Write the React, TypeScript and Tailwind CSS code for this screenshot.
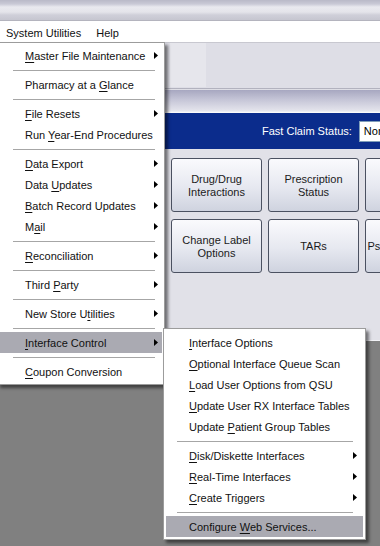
import type { ReactNode } from "react";

// ── Types ──────────────────────────────────────────────────────

type Entry =
  | { kind: "item"; label: string; u: number; arrow?: boolean; active?: boolean }
  | { kind: "sep" };

// ── Data ───────────────────────────────────────────────────────

const MAIN_MENU: Entry[] = [
  { kind: "item", label: "Master File Maintenance", u: 0, arrow: true },
  { kind: "sep" },
  { kind: "item", label: "Pharmacy at a Glance", u: 14 },
  { kind: "sep" },
  { kind: "item", label: "File Resets", u: 0, arrow: true },
  { kind: "item", label: "Run Year-End Procedures", u: 4 },
  { kind: "sep" },
  { kind: "item", label: "Data Export", u: 0, arrow: true },
  { kind: "item", label: "Data Updates", u: 5, arrow: true },
  { kind: "item", label: "Batch Record Updates", u: 0, arrow: true },
  { kind: "item", label: "Mail", u: 1, arrow: true },
  { kind: "sep" },
  { kind: "item", label: "Reconciliation", u: 0, arrow: true },
  { kind: "sep" },
  { kind: "item", label: "Third Party", u: 6, arrow: true },
  { kind: "sep" },
  { kind: "item", label: "New Store Utilities", u: 11, arrow: true },
  { kind: "sep" },
  { kind: "item", label: "Interface Control", u: 0, arrow: true, active: true },
  { kind: "sep" },
  { kind: "item", label: "Coupon Conversion", u: 0 },
];

const SUB_MENU: Entry[] = [
  { kind: "item", label: "Interface Options", u: 0 },
  { kind: "item", label: "Optional Interface Queue Scan", u: 0 },
  { kind: "item", label: "Load User Options from QSU", u: 0 },
  { kind: "item", label: "Update User RX Interface Tables", u: 0 },
  { kind: "item", label: "Update Patient Group Tables", u: 7 },
  { kind: "sep" },
  { kind: "item", label: "Disk/Diskette Interfaces", u: 0, arrow: true },
  { kind: "item", label: "Real-Time Interfaces", u: 0, arrow: true },
  { kind: "item", label: "Create Triggers", u: 0, arrow: true },
  { kind: "sep" },
  { kind: "item", label: "Configure Web Services...", u: 10, active: true },
];

// third column sits mostly past the right edge of the window
const BUTTONS: string[][] = [
  ["Drug/Drug", "Interactions"],
  ["Prescription", "Status"],
  [],
  ["Change Label", "Options"],
  ["TARs"],
  ["Pseudoephedrine"],
];

// ── Component ──────────────────────────────────────────────────

export default function App() {
  return (
    <div className="relative h-[546px] w-[380px] overflow-hidden bg-[#808080] font-['Liberation_Sans',Arial,sans-serif] text-[11px] text-[#111]">
      {/* Title bar strip */}
      <div className="h-[21px] border-b border-[#b4b4be] bg-[linear-gradient(#b9b9c8_0px,#c9c9d6_4px,#e9e9ef_7px,#e4e4ea_12px,#cfcfd9_15px,#c6c6d0_20px)]" />

      {/* Menu bar */}
      <div className="flex h-[21px] items-center bg-white pt-[3px]">
        <span className="pl-[6px]">System Utilities</span>
        <span className="pl-[15px]">Help</span>
      </div>

      {/* Toolbar area */}
      <div className="h-[46px] border-t border-[#c8c8d0] bg-[#dedee6]" />
      <div className="h-[2px] bg-[linear-gradient(#9c9cab,#f4f4f8)]" />

      {/* Silver strip */}
      <div className="h-[23px] bg-[linear-gradient(#a7a7c0,#c4c4d6_40%,#e4e4ec_90%,#ffffff)]" />

      {/* Blue status bar */}
      <div className="flex h-[36px] items-center whitespace-nowrap bg-[#0b2c8c] pl-[262px]">
        <span className="text-white">Fast Claim Status:</span>
        <div className="ml-[7px] flex h-[21px] w-[80px] shrink-0 items-center border border-[#7f9db9] bg-white pl-[4px] text-black">
          Normal
        </div>
      </div>

      {/* Button panel */}
      <div className="h-[192px] border-b border-[#f2f2f6] bg-[#e1e1e8] pl-[171px] pt-[9px]">
        <div className="grid w-[300px] grid-cols-[91px_91px_91px] gap-x-[6px] gap-y-[7px]">
          {BUTTONS.map((lines, i) => (
            <div
              key={i}
              className="flex h-[54px] flex-col items-center justify-center whitespace-nowrap rounded-[3px] border border-[#4b5161] bg-[linear-gradient(#fafafd,#e6e8f0_55%,#cfd3df)] pt-[1px] text-center leading-[13px] text-[#1b1b1b]"
            >
              {lines.map((l) => (
                <span key={l}>{l}</span>
              ))}
            </div>
          ))}
        </div>
      </div>

      {/* Faded icon in toolbar */}
      <div className="absolute left-[170px] top-[43px] h-[44px] w-[36px] bg-[#e6e6ec]" />

      {/* System Utilities drop-down */}
      <Menu
        entries={MAIN_MENU}
        className="left-[-3px] top-[42px] w-[168px]"
        textPad="pl-[25px]"
        arrowPad="pr-[4px]"
        sepClass="ml-[13px] mr-[7px]"
      />

      {/* Interface Control sub-menu */}
      <Menu
        entries={SUB_MENU}
        className="left-[163px] top-[328px] w-[203px] pt-[3px]"
        textPad="pl-[23px]"
        arrowPad="pr-[6px]"
        sepClass="ml-[11px] mr-[10px]"
      />
    </div>
  );
}

// ── Sub-components ─────────────────────────────────────────────

function Menu({
  entries,
  className,
  textPad,
  arrowPad,
  sepClass,
}: {
  entries: Entry[];
  className: string;
  textPad: string;
  arrowPad: string;
  sepClass: string;
}) {
  return (
    <div
      className={`absolute z-10 border border-[#9c9c9c] bg-white p-[2px] shadow-[3px_3px_3px_rgba(0,0,0,0.5)] ${className}`}
    >
      {entries.map((e, i) =>
        e.kind === "sep" ? (
          <div key={i} className={`flex h-[8px] items-center ${sepClass}`}>
            <div className="h-px w-full bg-[#a6a6a6]" />
          </div>
        ) : (
          <div
            key={i}
            className={`flex h-[21px] items-center whitespace-nowrap pt-[2px] ${textPad} ${arrowPad} ${
              e.active ? "bg-[#aaaab2]" : ""
            }`}
          >
            <span className="flex-1">{mnemonic(e.label, e.u)}</span>
            {e.arrow && (
              <svg width="4" height="7" viewBox="0 0 4 7" className="mb-[2px] shrink-0">
                <polygon points="0,0 4,3.5 0,7" fill="#000" />
              </svg>
            )}
          </div>
        ),
      )}
    </div>
  );
}

function mnemonic(label: string, u: number): ReactNode {
  return (
    <>
      {label.slice(0, u)}
      <span className="underline underline-offset-[2px]">{label[u]}</span>
      {label.slice(u + 1)}
    </>
  );
}
